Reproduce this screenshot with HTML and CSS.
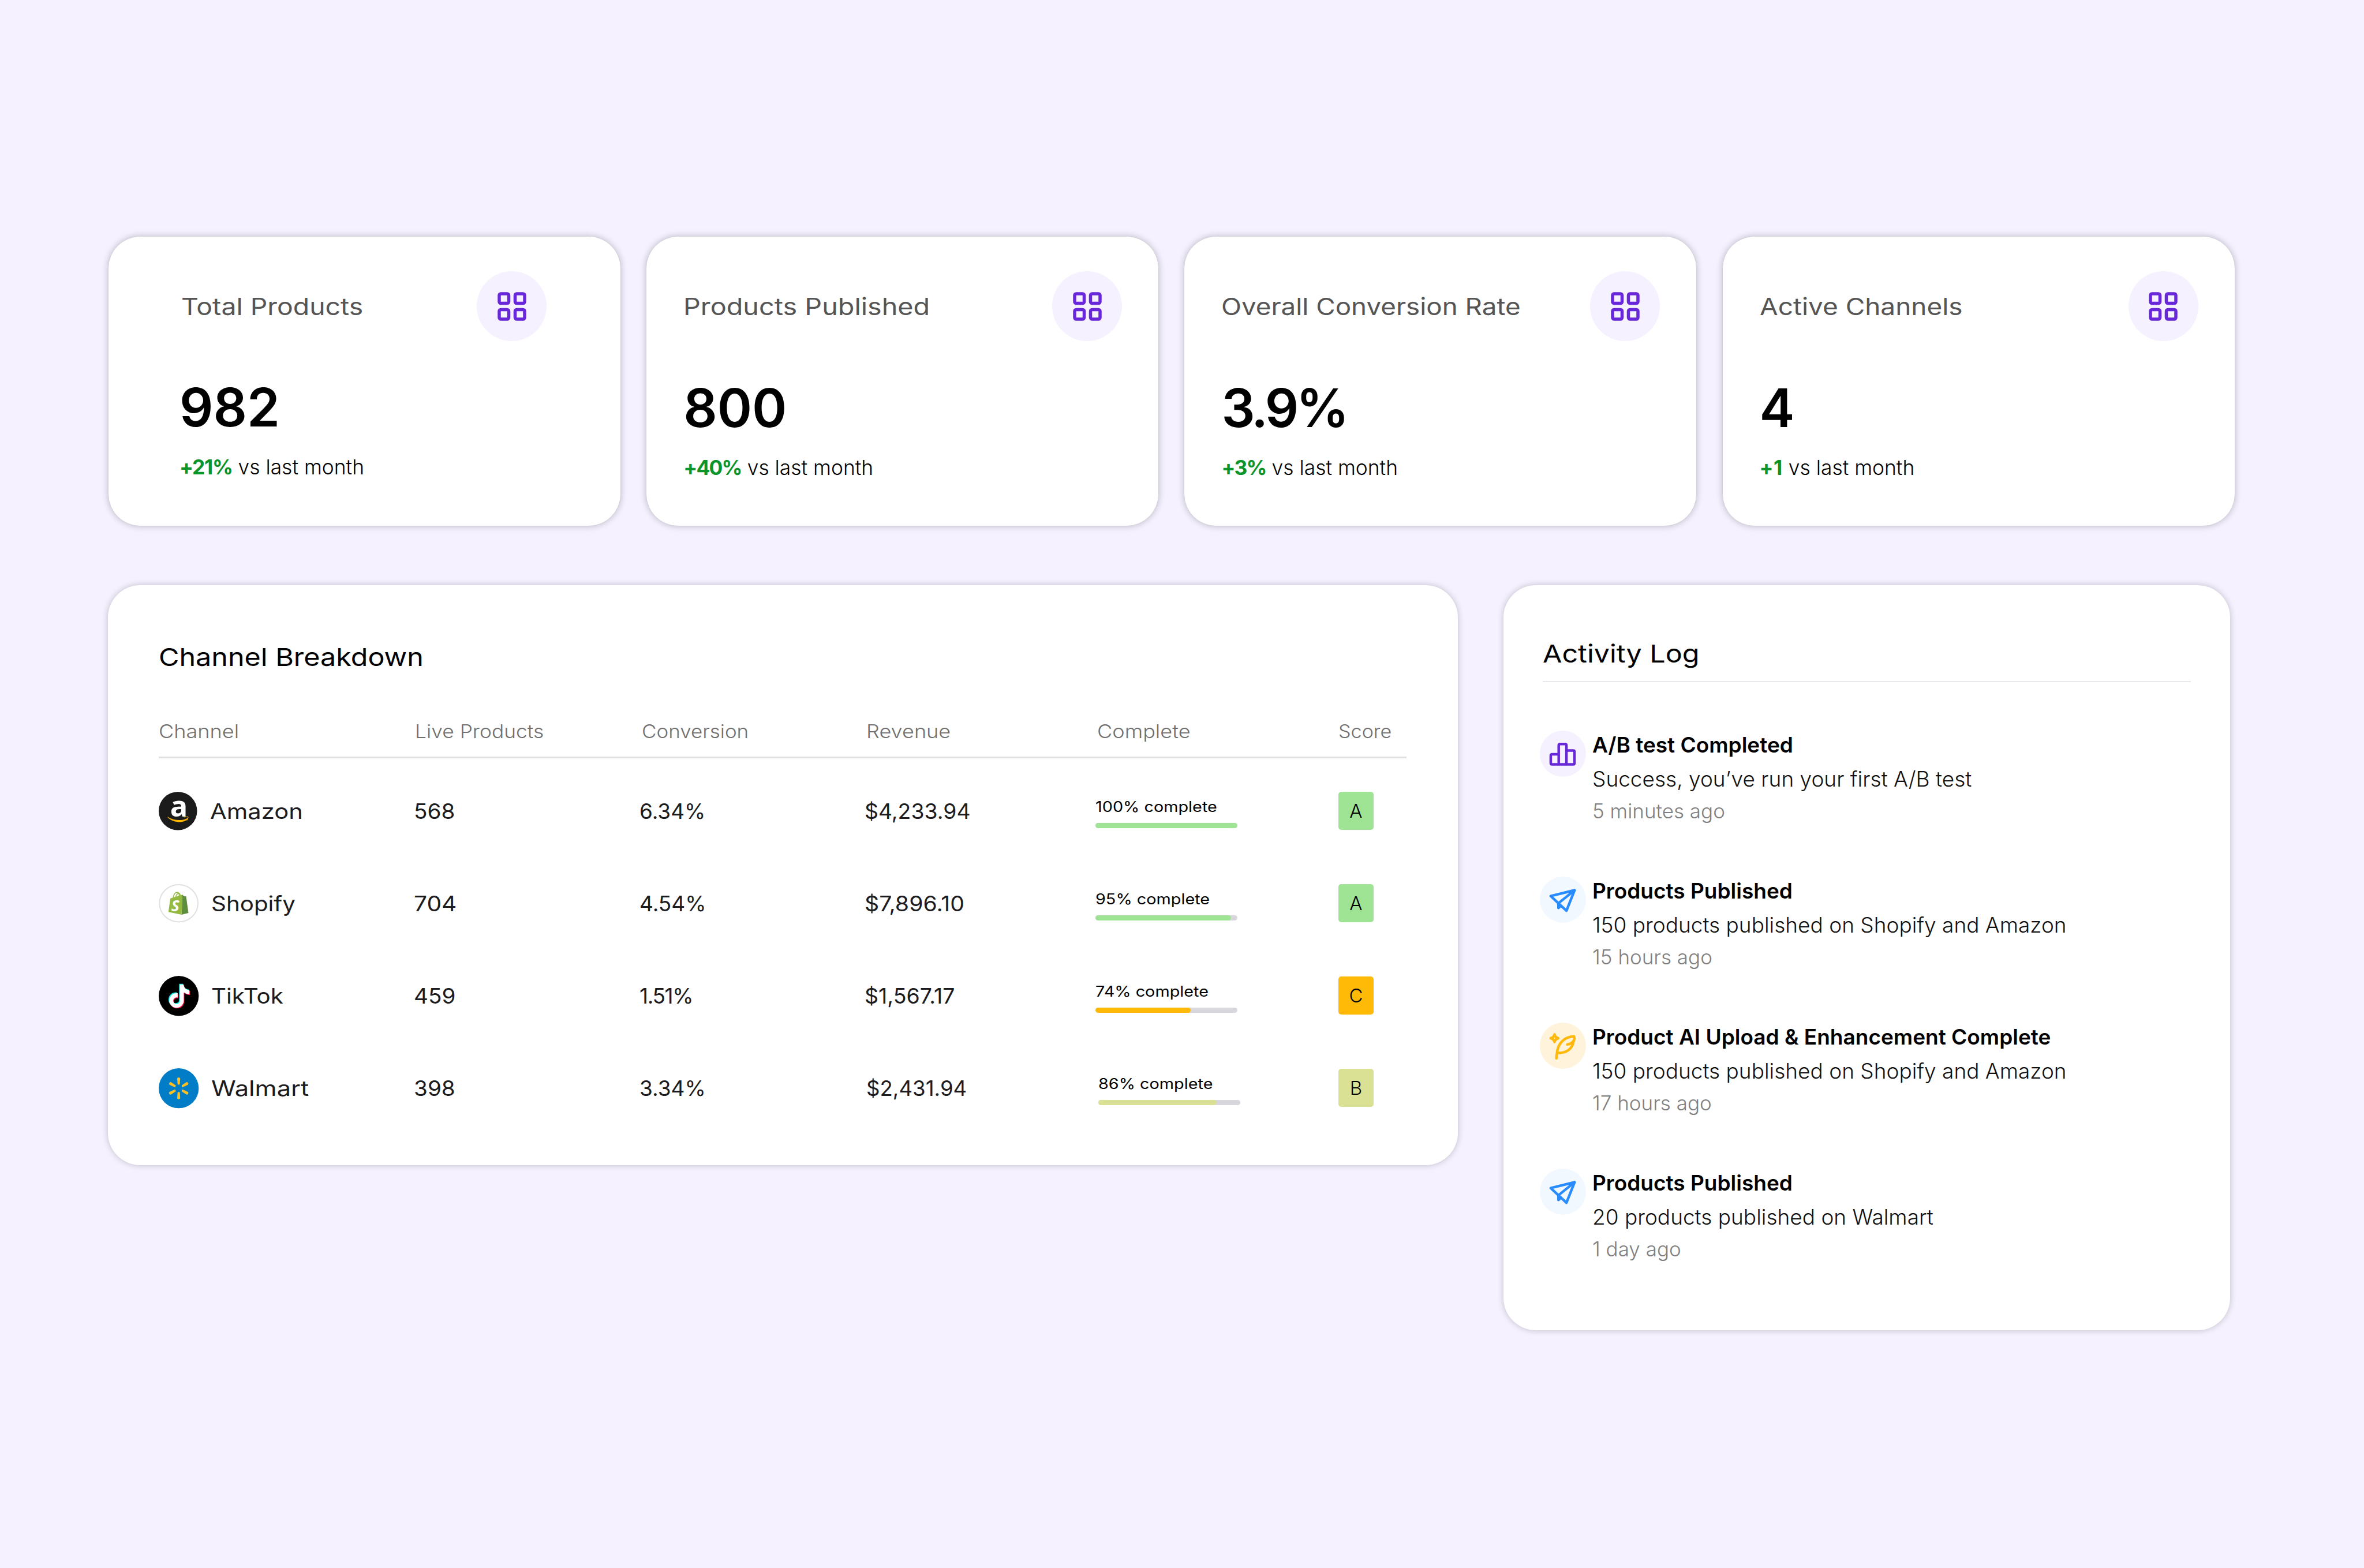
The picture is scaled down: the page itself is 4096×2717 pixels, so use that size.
FILE: index.html
```
<!DOCTYPE html>
<html lang="en">
<head>
    <meta charset="UTF-8">
    <meta name="viewport" content="width=device-width, initial-scale=1.0">
    <title>Channel Dashboard</title>
    <link rel="stylesheet" href="styles.css">
</head>
<body>
    <!-- Shared icons -->
    <svg class="icon-defs" xmlns="http://www.w3.org/2000/svg">
        <symbol id="icon-grid" viewBox="0 0 24 24">
            <g fill="none" stroke="#6927da" stroke-width="2">
                <rect x="4" y="4" width="6" height="6" rx="1"/>
                <rect x="14" y="4" width="6" height="6" rx="1"/>
                <rect x="4" y="14" width="6" height="6" rx="1"/>
                <rect x="14" y="14" width="6" height="6" rx="1"/>
            </g>
        </symbol>
        <symbol id="icon-plane" viewBox="0 0 340 340">
            <g fill="none" stroke="#288cff" stroke-width="19" stroke-linejoin="round" stroke-linecap="round">
                <path d="M256 100L80 143L196 251Z"/>
                <path d="M256 100L137 196V231L154 215"/>
            </g>
            <path d="M137 196V231L154 215Z" fill="#288cff"/>
        </symbol>
        <symbol id="tiktok-note" viewBox="0 0 24 24">
            <path d="M12.525.02c1.31-.02 2.61-.01 3.91-.02.08 1.53.63 3.09 1.75 4.17 1.12 1.11 2.7 1.62 4.24 1.79v4.03c-1.44-.05-2.89-.35-4.2-.97-.57-.26-1.1-.59-1.62-.93-.01 2.92.01 5.84-.02 8.75-.08 1.4-.54 2.79-1.35 3.94-1.31 1.92-3.58 3.17-5.91 3.21-1.43.08-2.86-.31-4.08-1.03-2.02-1.19-3.44-3.37-3.65-5.71-.02-.5-.03-1-.01-1.49.18-1.9 1.12-3.72 2.58-4.96 1.66-1.44 3.98-2.13 6.15-1.72.02 1.48-.04 2.96-.04 4.44-.99-.32-2.15-.23-3.02.37-.63.41-1.11 1.04-1.36 1.75-.21.51-.15 1.07-.14 1.61.24 1.64 1.82 3.02 3.5 2.87 1.12-.01 2.19-.66 2.77-1.61.19-.33.4-.67.41-1.06.1-1.79.06-3.57.07-5.36.01-4.03-.01-8.05.02-12.07z"/>
        </symbol>
    </svg>

    <div class="dashboard">
        <div class="stats">
            <div class="card stat stat-total">
                <div class="stat-head">
                    <h2>Total Products</h2>
                    <span class="stat-icon"><svg><use href="#icon-grid"/></svg></span>
                </div>
                <div class="value">982</div>
                <div class="delta"><b>+21%</b> vs last month</div>
            </div>
            <div class="card stat stat-published">
                <div class="stat-head">
                    <h2>Products Published</h2>
                    <span class="stat-icon"><svg><use href="#icon-grid"/></svg></span>
                </div>
                <div class="value">800</div>
                <div class="delta"><b>+40%</b> vs last month</div>
            </div>
            <div class="card stat stat-conversion">
                <div class="stat-head">
                    <h2>Overall Conversion Rate</h2>
                    <span class="stat-icon"><svg><use href="#icon-grid"/></svg></span>
                </div>
                <div class="value">3.9%</div>
                <div class="delta"><b>+3%</b> vs last month</div>
            </div>
            <div class="card stat stat-channels">
                <div class="stat-head">
                    <h2>Active Channels</h2>
                    <span class="stat-icon"><svg><use href="#icon-grid"/></svg></span>
                </div>
                <div class="value">4</div>
                <div class="delta"><b>+1</b> vs last month</div>
            </div>
        </div>

        <div class="panels">
            <div class="card breakdown">
                <h3>Channel Breakdown</h3>
                <div class="table-head">
                    <span>Channel</span>
                    <span>Live Products</span>
                    <span>Conversion</span>
                    <span>Revenue</span>
                    <span>Complete</span>
                    <span>Score</span>
                </div>

                <div class="table-row amazon">
                    <div class="channel">
                        <svg class="logo" viewBox="0 0 282 282">
                            <circle cx="141" cy="141" r="141" fill="#1b1b1b"/>
                            <text class="amazon-letter" x="84" y="183">a</text>
                            <path d="M67 184C108 209 164 218 208 195C213 193 216 198 211 202C172 234 104 228 66 188C64 185 65 183 67 184Z" fill="#ffb400"/>
                            <path d="M191 187C199 182 211 181 215 184C217 190 212 202 207 208" fill="none" stroke="#ffb400" stroke-width="5" stroke-linecap="round"/>
                        </svg>
                        <span class="channel-name">Amazon</span>
                    </div>
                    <div class="live">568</div>
                    <div class="rate">6.34%</div>
                    <div class="revenue">$4,233.94</div>
                    <div class="complete">
                        <span>100% complete</span>
                        <div class="bar"><div class="fill green" style="width: 100%"></div></div>
                    </div>
                    <div class="score green">A</div>
                </div>

                <div class="table-row shopify">
                    <div class="channel">
                        <svg class="logo" viewBox="0 0 290 280">
                            <ellipse cx="145" cy="140" rx="140.500" ry="135.500" fill="#fff" stroke="#e0e0e3" stroke-width="8"/>
                            <path d="M172 77L177 82L186 88L199 89L216 210L166 223Z" fill="#5e8e3e"/>
                            <path d="M84 104L172 77L166 223L70 203Z" fill="#94ba40"/>
                            <path d="M103 100C108 72 122 59 134 60C146 61 149 72 148 88M122 96C126 77 138 66 148 67C154 68 156 76 156 84" fill="none" stroke="#94ba40" stroke-width="6"/>
                            <text class="shopify-letter" x="91" y="196">S</text>
                        </svg>
                        <span class="channel-name">Shopify</span>
                    </div>
                    <div class="live">704</div>
                    <div class="rate">4.54%</div>
                    <div class="revenue">$7,896.10</div>
                    <div class="complete">
                        <span>95% complete</span>
                        <div class="bar"><div class="fill green" style="width: 95.5%"></div></div>
                    </div>
                    <div class="score green">A</div>
                </div>

                <div class="table-row tiktok">
                    <div class="channel">
                        <svg class="logo" viewBox="0 0 294 294">
                            <circle cx="147" cy="147" r="147" fill="#000"/>
                            <use href="#tiktok-note" x="61" y="57" width="171" height="171" fill="#08f0ea"/>
                            <use href="#tiktok-note" x="70" y="69" width="171" height="171" fill="#ff1250"/>
                            <use href="#tiktok-note" x="66" y="63" width="171" height="171" fill="#fff"/>
                        </svg>
                        <span class="channel-name">TikTok</span>
                    </div>
                    <div class="live">459</div>
                    <div class="rate">1.51%</div>
                    <div class="revenue">$1,567.17</div>
                    <div class="complete">
                        <span>74% complete</span>
                        <div class="bar"><div class="fill orange" style="width: 67.3%"></div></div>
                    </div>
                    <div class="score orange">C</div>
                </div>

                <div class="table-row walmart">
                    <div class="channel">
                        <svg class="logo" viewBox="0 0 294 294">
                            <circle cx="147" cy="147" r="147" fill="#007dc6"/>
                            <g fill="#ffc021">
                                <path id="spoke" d="M136 77Q136 68 147 68Q158 68 158 77L155 117Q154 121 147 121Q140 121 139 117Z"/>
                                <use href="#spoke" transform="rotate(60 147 148)"/>
                                <use href="#spoke" transform="rotate(120 147 148)"/>
                                <use href="#spoke" transform="rotate(180 147 148)"/>
                                <use href="#spoke" transform="rotate(240 147 148)"/>
                                <use href="#spoke" transform="rotate(300 147 148)"/>
                            </g>
                        </svg>
                        <span class="channel-name">Walmart</span>
                    </div>
                    <div class="live">398</div>
                    <div class="rate">3.34%</div>
                    <div class="revenue">$2,431.94</div>
                    <div class="complete">
                        <span>86% complete</span>
                        <div class="bar"><div class="fill lime" style="width: 83.5%"></div></div>
                    </div>
                    <div class="score lime">B</div>
                </div>
            </div>

            <div class="card activity">
                <h3>Activity Log</h3>
                <div class="log">
                    <div class="log-item">
                        <span class="log-icon purple">
                            <svg viewBox="0 0 340 340">
                                <path d="M139 174H90Q80.500 174 80.500 184V239Q80.500 249 90 249H246Q255 249 255 239V156Q255 147 246 147H196M139 249V109Q139 99 149 99H186Q196 99 196 109V249" fill="none" stroke="#6927da" stroke-width="19"/>
                            </svg>
                        </span>
                        <div class="log-text">
                            <h4>A/B test Completed</h4>
                            <p>Success, you’ve run your first A/B test</p>
                            <small>5 minutes ago</small>
                        </div>
                    </div>
                    <div class="log-item">
                        <span class="log-icon blue"><svg><use href="#icon-plane"/></svg></span>
                        <div class="log-text">
                            <h4>Products Published</h4>
                            <p>150 products published on Shopify and Amazon</p>
                            <small>15 hours ago</small>
                        </div>
                    </div>
                    <div class="log-item">
                        <span class="log-icon yellow">
                            <svg viewBox="0 0 340 340">
                                <g fill="none" stroke="#ffb90a" stroke-width="19" stroke-linecap="round" stroke-linejoin="round">
                                    <path d="M108 87Q113 110 136 115Q113 120 108 143Q103 120 80 115Q103 110 108 87Z"/>
                                    <path d="M122 263Q122 243 126 224C133 153 178 105 251 101Q259 117 249 136C239 196 196 224 127 224"/>
                                    <path d="M202 161Q234 157 249 134"/>
                                </g>
                            </svg>
                        </span>
                        <div class="log-text">
                            <h4>Product AI Upload &amp; Enhancement Complete</h4>
                            <p>150 products published on Shopify and Amazon</p>
                            <small>17 hours ago</small>
                        </div>
                    </div>
                    <div class="log-item">
                        <span class="log-icon blue"><svg><use href="#icon-plane"/></svg></span>
                        <div class="log-text">
                            <h4>Products Published</h4>
                            <p>20 products published on Walmart</p>
                            <small>1 day ago</small>
                        </div>
                    </div>
                </div>
            </div>
        </div>
    </div>
</body>
</html>
```
FILE: styles.css
```
/* General Styles */
* {
    box-sizing: border-box;
    margin: 0;
    padding: 0;
}

body {
    font-family: Inter, sans-serif;
    background: #f5f1ff;
    color: #000;
    height: 2717px;
    overflow: hidden;
}

svg {
    display: block;
}

.icon-defs {
    position: absolute;
    width: 0;
    height: 0;
}

.dashboard {
    padding: 409px 0 0 187px;
}

.card {
    background: #fff;
    border-radius: 56px;
    box-shadow: 0 0 12px rgba(0, 0, 0, 0.22);
}

/* Wide headings */
h2, h3 {
    font-weight: 400;
    line-height: 40px;
    white-space: nowrap;
    transform: scaleX(1.12);
    transform-origin: left;
}

/* Stat cards */
.stats {
    display: flex;
    gap: 43.2px;
}

.stat {
    width: 889px;
    height: 503px;
    padding: 60px 63px 0 64px;
    border: 1px solid #d3d0da;
    flex-shrink: 0;
}

.stat-head {
    display: flex;
    justify-content: space-between;
    align-items: center;
    height: 121px;
}

.stat-head h2 {
    font-size: 41px;
    color: #555;
}

.stat-icon {
    display: flex;
    align-items: center;
    justify-content: center;
    width: 121px;
    height: 121px;
    border-radius: 50%;
    background: #f5f1ff;
}

.stat-icon svg {
    width: 66px;
    height: 66px;
}

.value {
    margin-top: 66px;
    font-size: 91.5px;
    font-weight: 600;
    line-height: 100px;
}

.delta {
    margin-top: 34px;
    font-size: 35.4px;
    font-weight: 300;
    line-height: 40px;
    white-space: nowrap;
}

.delta b {
    font-weight: 700;
    letter-spacing: -1.3px;
    color: #0b942a;
}

.stat-total {
    padding: 60px 128px 0 123px;
}

.stat-total h2 {
    margin-left: 3px;
    transform: scaleX(1.13);
}

.stat-total .value {
    margin-top: 65px;
}

.stat-published h2 {
    transform: scaleX(1.14);
}

.stat-published b,
.stat-conversion b {
    letter-spacing: -1.8px;
}

.stat-conversion h2 {
    transform: scaleX(1.115);
}

.stat-conversion .value {
    letter-spacing: -4.5px;
}

.stat-channels h2 {
    transform: scaleX(1.12);
}

.stat-channels b {
    letter-spacing: 0.5px;
}

/* Panels */
.panels {
    display: flex;
    align-items: flex-start;
    gap: 79px;
    margin-top: 102px;
}

.panels h3 {
    font-size: 43px;
    transform: scaleX(1.127);
}

.breakdown {
    width: 2339px;
    height: 1005px;
    padding: 104px 89px 0 88px;
}

.table-head, .table-row {
    display: grid;
    white-space: nowrap;
}

.table-head {
    grid-template-columns: 444px 393px 389px 400px 418px 118px;
    margin-top: 90px;
    padding-bottom: 23px;
    border-bottom: 3px solid #e0e0e2;
    font-size: 32.5px;
    font-weight: 350;
    line-height: 40px;
    color: #6f6f6f;
}

.table-head span {
    transform: scaleX(1.11);
    transform-origin: left;
}

.table-head span:nth-child(2) {
    transform: scaleX(1.088);
}

.table-head span:nth-child(3) {
    transform: scaleX(1.075);
}

.table-head span:nth-child(6) {
    transform: scaleX(1.05);
}

.table-row {
    grid-template-columns: 442px 391px 390px 399.6px 421.4px 118px;
    align-items: center;
    height: 160.1px;
    font-size: 37px;
    font-weight: 420;
    color: #1c1c1e;
}

.table-head + .table-row {
    margin-top: 11px;
}

.channel {
    display: flex;
    align-items: center;
    gap: 22px;
}

.channel-name, .live, .rate, .revenue, .complete span {
    transform-origin: left;
}

.logo {
    width: 69.3px;
    height: 69.3px;
    overflow: visible;
}

.amazon .logo {
    width: 66.5px;
    height: 66.5px;
}

.shopify .logo {
    height: 66.5px;
}

.amazon-letter {
    font: 700 214px "Open Sans", sans-serif;
    fill: #fff;
}

.shopify-letter {
    font: italic 700 112px "Open Sans", sans-serif;
    fill: #fff;
}

.amazon .channel-name {
    transform: scaleX(1.127);
}

.shopify .channel-name,
.tiktok .channel-name {
    transform: scaleX(1.09);
}

.walmart .channel-name {
    transform: scaleX(1.175);
}

.live {
    transform: scaleX(1.045);
}

.shopify .live {
    transform: scaleX(1.1);
}

.revenue {
    transform: scaleX(1.01);
}

.shopify .revenue {
    transform: scaleX(1.06);
}

.tiktok .revenue {
    transform: scaleX(1.015);
}

.tiktok .rate {
    letter-spacing: -1.4px;
}

.walmart .revenue {
    margin-left: 3px;
    transform: scaleX(0.99);
}

.walmart .complete {
    margin-left: 5px;
}

.complete {
    padding-top: 7px;
    font-size: 25.5px;
    line-height: 30px;
    color: #000;
}

.complete span {
    display: block;
    transform: scaleX(1.13);
}

.bar {
    width: 246px;
    height: 9px;
    margin-top: 13px;
    border-radius: 5px;
    background: #d8d7dd;
    overflow: hidden;
}

.fill {
    height: 100%;
    border-radius: 5px;
}

.green {
    background: #9fe395;
}

.orange {
    background: #ffba08;
}

.lime {
    background: #dae194;
}

.score {
    width: 61px;
    height: 66px;
    border-radius: 5px;
    font-size: 33px;
    font-weight: 350;
    line-height: 66px;
    text-align: center;
    color: #000;
}

/* Activity log */
.activity {
    width: 1259px;
    height: 1291px;
    padding: 98px 68px 0;
}

.log {
    margin-top: 28px;
    padding-top: 79px;
    border-top: 2px solid #e9e8ef;
}

.log-item {
    display: flex;
    gap: 11px;
    height: 252.9px;
    margin-left: -5px;
    white-space: nowrap;
}

.log-icon {
    width: 80px;
    height: 80px;
    margin-top: 5px;
    border-radius: 50%;
}

.log-icon svg {
    width: 80px;
    height: 80px;
}

.purple {
    background: #f5f1ff;
}

.blue {
    background: #f2f8ff;
}

.yellow {
    background: #fff3db;
}

.log-text h4 {
    font-size: 37px;
    font-weight: 600;
    line-height: 60px;
}

.log-text p {
    font-size: 37px;
    font-weight: 300;
    line-height: 57px;
    color: #111;
}

.log-text small {
    display: block;
    font-size: 35px;
    font-weight: 300;
    line-height: 54px;
    color: #808080;
}
```
